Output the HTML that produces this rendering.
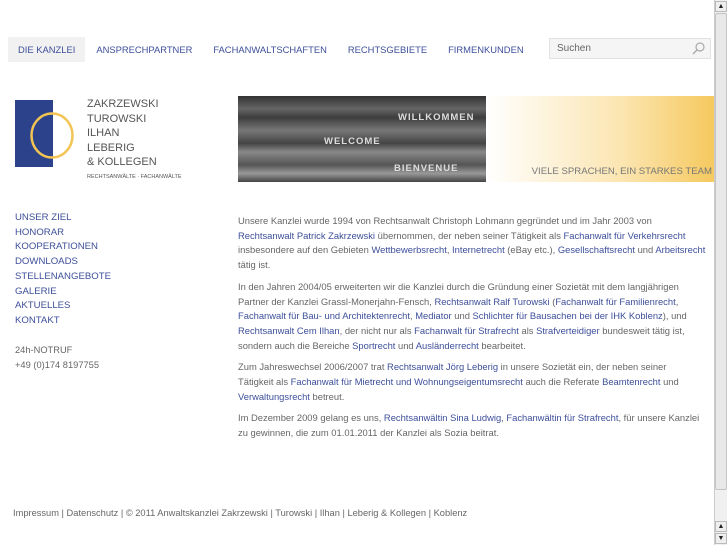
<!DOCTYPE html>
<html><head><meta charset="utf-8"><style>
*{margin:0;padding:0;box-sizing:border-box}
body{width:727px;height:545px;overflow:hidden;background:#fff;font-family:"Liberation Sans",sans-serif;position:relative;color:#666}
a{color:#3d4f9a;text-decoration:none}
.nav{position:absolute;top:37px;left:8px;height:25px;display:flex;font-size:9.4px;color:#3d4f9a}
.nav div{padding:0 10px;line-height:25px;margin-right:1px}
.nav .act{background:#f1f1f1}
.search{position:absolute;left:549px;top:38px;width:162px;height:21px;border:1px solid #e2e2e2;background:#f5f5f5;font-size:10px;color:#666;padding:4px 7px}
.logo{position:absolute;left:15px;top:100px;width:38px;height:67px;background:#2c438c}
.lt{position:absolute;left:87px;top:97px;font-size:11px;line-height:14.6px;color:#555}
.ls{position:absolute;left:87px;top:174px;font-size:5.5px;color:#555}
.ban{position:absolute;left:238px;top:96px;width:248px;height:86px;background:linear-gradient(180deg,#333 0%,#666 15%,#3d3d3d 25%,#777 40%,#444 55%,#888 65%,#555 80%,#999 90%,#444 100%)}
.ban span{position:absolute;color:#ddd;font-size:9.5px;font-weight:bold;letter-spacing:1px}
.grad{position:absolute;left:486px;top:96px;width:228px;height:86px;background:linear-gradient(90deg,#fff 0%,#fbe5b0 60%,#f6c95f 100%)}
.grad span{position:absolute;right:2px;top:70px;font-size:9.6px;color:#777}
.side{position:absolute;left:15px;top:211px;font-size:9.6px;line-height:14.7px;color:#3d4f9a}
.side2{position:absolute;left:15px;top:343px;font-size:9.3px;line-height:15px;color:#666}
.main{position:absolute;left:238px;top:214px;width:478px;font-size:9.4px;line-height:14.7px;color:#666}
.main p{margin-bottom:7px}
.foot{position:absolute;left:13px;top:508px;font-size:9.3px;color:#666}
.sb{position:absolute;left:714px;top:0;width:13px;height:545px;background:#f0f0f0;border-left:1px solid #ccc}
.th{position:absolute;left:715px;top:13px;width:12px;height:477px;background:#e8e8e8;border:1px solid #c4c4c4;border-radius:2px}
.ar{position:absolute;left:715px;width:12px;height:11px;background:#eee;border:1px solid #bbb;font-size:7px;line-height:9px;text-align:center;color:#222}
</style></head><body>
<div class="nav"><div class="act">DIE KANZLEI</div><div>ANSPRECHPARTNER</div><div>FACHANWALTSCHAFTEN</div><div>RECHTSGEBIETE</div><div>FIRMENKUNDEN</div></div>
<div class="search">Suchen<svg style="position:absolute;right:5px;top:3px" width="13" height="13" viewBox="0 0 13 13"><circle cx="8" cy="5" r="4" fill="none" stroke="#aaa" stroke-width="1.2"/><path d="M5 8 L1 12" stroke="#aaa" stroke-width="1.4"/></svg></div>
<div class="logo"></div>
<svg style="position:absolute;left:28px;top:110px" width="50" height="52"><ellipse cx="24" cy="25.5" rx="20.5" ry="22" fill="none" stroke="#f2c453" stroke-width="2.5"/></svg>
<div class="lt">ZAKRZEWSKI<br>TUROWSKI<br>ILHAN<br>LEBERIG<br>&amp; KOLLEGEN</div>
<div class="ls">RECHTSANWÄLTE · FACHANWÄLTE</div>
<div class="ban"><span style="left:160px;top:16px">WILLKOMMEN</span><span style="left:86px;top:40px">WELCOME</span><span style="left:156px;top:67px">BIENVENUE</span></div>
<div class="grad"><span>VIELE SPRACHEN, EIN STARKES TEAM</span></div>
<div class="side">UNSER ZIEL<br>HONORAR<br>KOOPERATIONEN<br>DOWNLOADS<br>STELLENANGEBOTE<br>GALERIE<br>AKTUELLES<br>KONTAKT</div>
<div class="side2">24h-NOTRUF<br>+49 (0)174 8197755</div>
<div class="main">
<p>Unsere Kanzlei wurde 1994 von Rechtsanwalt Christoph Lohmann gegründet und im Jahr 2003 von<br><a>Rechtsanwalt Patrick Zakrzewski</a> übernommen, der neben seiner Tätigkeit als <a>Fachanwalt für Verkehrsrecht</a><br>insbesondere auf den Gebieten <a>Wettbewerbsrecht</a>, <a>Internetrecht</a> (eBay etc.), <a>Gesellschaftsrecht</a> und <a>Arbeitsrecht</a><br>tätig ist.</p>
<p>In den Jahren 2004/05 erweiterten wir die Kanzlei durch die Gründung einer Sozietät mit dem langjährigen<br>Partner der Kanzlei Grassl-Monerjahn-Fensch, <a>Rechtsanwalt Ralf Turowski</a> (<a>Fachanwalt für Familienrecht</a>,<br><a>Fachanwalt für Bau- und Architektenrecht</a>, <a>Mediator</a> und <a>Schlichter für Bausachen bei der IHK Koblenz</a>), und<br><a>Rechtsanwalt Cem Ilhan</a>, der nicht nur als <a>Fachanwalt für Strafrecht</a> als <a>Strafverteidiger</a> bundesweit tätig ist,<br>sondern auch die Bereiche <a>Sportrecht</a> und <a>Ausländerrecht</a> bearbeitet.</p>
<p>Zum Jahreswechsel 2006/2007 trat <a>Rechtsanwalt Jörg Leberig</a> in unsere Sozietät ein, der neben seiner<br>Tätigkeit als <a>Fachanwalt für Mietrecht und Wohnungseigentumsrecht</a> auch die Referate <a>Beamtenrecht</a> und<br><a>Verwaltungsrecht</a> betreut.</p>
<p>Im Dezember 2009 gelang es uns, <a>Rechtsanwältin Sina Ludwig</a>, <a>Fachanwältin für Strafrecht</a>, für unsere Kanzlei<br>zu gewinnen, die zum 01.01.2011 der Kanzlei als Sozia beitrat.</p>
</div>
<div class="foot">Impressum | Datenschutz | © 2011 Anwaltskanzlei Zakrzewski | Turowski | Ilhan | Leberig &amp; Kollegen | Koblenz</div>
<div class="sb"></div>
<div class="th"></div>
<div class="ar" style="top:1px">▲</div>
<div class="ar" style="top:521px">▲</div>
<div class="ar" style="top:533px">▼</div>
</body></html>
